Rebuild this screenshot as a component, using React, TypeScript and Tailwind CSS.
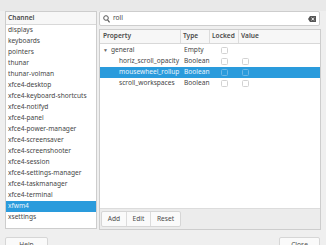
import React from 'react';

const channels = [
  'displays',
  'keyboards',
  'pointers',
  'thunar',
  'thunar-volman',
  'xfce4-desktop',
  'xfce4-keyboard-shortcuts',
  'xfce4-notifyd',
  'xfce4-panel',
  'xfce4-power-manager',
  'xfce4-screensaver',
  'xfce4-screenshooter',
  'xfce4-session',
  'xfce4-settings-manager',
  'xfce4-taskmanager',
  'xfce4-terminal',
  'xfwm4',
  'xsettings',
];

const props = [
  { name: 'horiz_scroll_opacity', type: 'Boolean', selected: false },
  { name: 'mousewheel_rollup', type: 'Boolean', selected: true },
  { name: 'scroll_workspaces', type: 'Boolean', selected: false },
];

function Check({ selected }: { selected?: boolean }) {
  return (
    <span
      className={`block w-[7px] h-[7px] rounded-[1.5px] border ${
        selected ? 'border-[#6db8e6] bg-[#2a9bdc]' : 'border-[#d2d2d2] bg-white'
      }`}
    />
  );
}

export default function App() {
  return (
    <div
      className="w-[326px] h-[245px] overflow-hidden bg-[#efefef] text-[#454545] text-[6.6px] leading-none"
      style={{ fontFamily: '"Noto Sans", "Open Sans", sans-serif' }}
    >
      <div className="h-[11px] bg-[#e9e9e9]" />

      <div className="flex pl-[5px] gap-[2px]">
        {/* Channel list */}
        <div className="w-[92px] h-[218px] bg-white border border-[#cdcdcd] flex flex-col">
          <div className="h-[13px] flex items-center px-[2px] bg-[#f7f7f7] border-b border-[#d8d8d8] font-semibold text-[#4a4a4a]">
            Channel
          </div>
          {channels.map((c) => (
            <div
              key={c}
              className={`h-[11px] flex items-center px-[2px] whitespace-nowrap ${
                c === 'xfwm4' ? 'bg-[#2a9bdc] text-[#eaf5fc]' : ''
              }`}
            >
              {c}
            </div>
          ))}
        </div>

        {/* Right side */}
        <div className="w-[222px] flex flex-col">
          <div className="h-[15px] mr-[1px] bg-white border border-[#cdcdcd] rounded-[2px] flex items-center px-[3px] gap-[3px]">
            <svg width="7" height="8" viewBox="0 0 7 8" fill="none">
              <circle cx="3" cy="3" r="2.3" stroke="#555" strokeWidth="1" />
              <path d="M4.6 4.8 L6.6 7.4" stroke="#555" strokeWidth="1.2" />
            </svg>
            <span>roll</span>
            <span className="flex-1" />
            <svg width="8" height="6" viewBox="0 0 8 6">
              <path d="M2 0 H8 V6 H2 L0 3 Z" fill="#555" />
              <path d="M3.6 1.6 L6 4.4 M6 1.6 L3.6 4.4" stroke="#fff" strokeWidth="0.9" />
            </svg>
          </div>

          <div className="mt-[3px] h-[201px] border border-[#cdcdcd] flex flex-col">
            <div className="h-[14px] flex bg-[#f7f7f7] border-b border-[#d8d8d8] font-semibold text-[#4a4a4a]">
              <div className="w-[81px] flex items-center px-[3px] border-r border-[#dcdcdc]">Property</div>
              <div className="w-[29px] flex items-center px-[2px] border-r border-[#dcdcdc]">Type</div>
              <div className="w-[29px] flex items-center px-[2px] border-r border-[#dcdcdc]">Locked</div>
              <div className="flex-1 flex items-center px-[2px]">Value</div>
            </div>

            <div className="flex-1 bg-white pt-[1px]">
              <div className="h-[11px] flex items-center">
                <div className="w-[81px] flex items-center pl-[3px] gap-[3px]">
                  <span className="text-[5px] text-[#666]">▼</span>
                  <span>general</span>
                </div>
                <div className="w-[29px] px-[3px]">Empty</div>
                <div className="w-[29px] flex justify-center">
                  <Check />
                </div>
              </div>
              {props.map((p) => (
                <div
                  key={p.name}
                  className={`h-[11px] flex items-center ${p.selected ? 'bg-[#2a9bdc] text-[#eaf5fc]' : ''}`}
                >
                  <div className="w-[81px] pl-[19px] whitespace-nowrap">{p.name}</div>
                  <div className="w-[29px] px-[3px]">{p.type}</div>
                  <div className="w-[29px] flex justify-center">
                    <Check selected={p.selected} />
                  </div>
                  <div className="pl-[3px]">
                    <Check selected={p.selected} />
                  </div>
                </div>
              ))}
            </div>

            <div className="h-[21px] bg-[#ececec] border-t border-[#dcdcdc] flex items-start pt-[2px] pl-[1px]">
              <div className="flex h-[16px] bg-[#fafafa] border border-[#d6d6d6] rounded-[2px] text-[#4a4a4a]">
                <div className="w-[25px] flex items-center justify-center border-r border-[#dcdcdc]">Add</div>
                <div className="w-[24px] flex items-center justify-center border-r border-[#dcdcdc]">Edit</div>
                <div className="w-[29px] flex items-center justify-center">Reset</div>
              </div>
            </div>
          </div>
        </div>
      </div>

      <div className="flex justify-between pl-[5px] pr-[6px] mt-[7px]">
        <div className="w-[43px] h-[16px] bg-[#fafafa] border border-[#d6d6d6] rounded-[2px] flex items-center justify-center text-[#4a4a4a]">
          Help
        </div>
        <div className="w-[41px] h-[16px] bg-[#fafafa] border border-[#d6d6d6] rounded-[2px] flex items-center justify-center text-[#4a4a4a]">
          Close
        </div>
      </div>
    </div>
  );
}
